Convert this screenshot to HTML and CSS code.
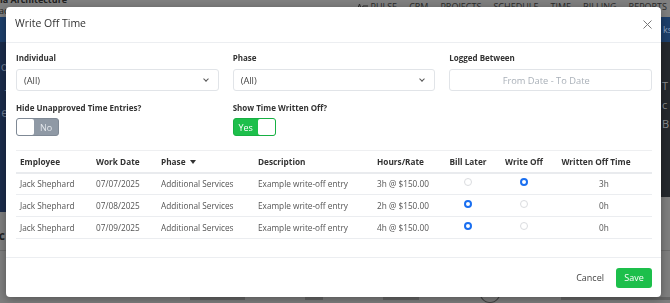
FILE: index.html
```html
<!DOCTYPE html>
<html>
<head>
    <meta charset="utf-8">
    <title>Write Off Time</title>
    <link rel="stylesheet" href="styles.css">
</head>
<body>
<!-- pagina de fundo (escurecida pelo modal) -->
<div class="app">
    <div class="topnav">
        <div class="brand">
            <span class="brand-name">nia Architecture</span>
            <span class="brand-sub">ac</span>
        </div>
        <nav class="menu">
            <span class="menu-item">
                <svg class="pulse-icon" width="13" height="8" viewBox="0 0 13 8"><path d="M0 5h3l1.5-4 2 6 1.5-4h5" fill="none" stroke="#2b2b2b" stroke-width="1"/></svg>PULSE
            </span>
            <span class="menu-item">CRM</span>
            <span class="menu-item">PROJECTS</span>
            <span class="menu-item">SCHEDULE</span>
            <span class="menu-item">TIME</span>
            <span class="menu-item">BILLING</span>
            <span class="menu-item">REPORTS</span>
        </nav>
    </div>
    <div class="band"><span class="band-link">ks</span></div>
    <div class="main">
        <div class="panel-left">
            <span>o</span><span>-</span><span>e</span>
        </div>
        <div class="panel-right">
            <span>T</span><span>c</span><span>B</span>
        </div>
    </div>
    <div class="section-title">fc</div>
    <!-- linha borrada atras do modal -->
    <div class="footer-row">
        <span class="blur-text w60"></span><span class="blur-text w20"></span><span class="blur-text w40"></span><span class="ring"></span><span class="blur-text w120"></span>
    </div>
</div>

<div class="modal">
    <div class="modal-header">
        <h5 class="modal-title">Write Off Time</h5>
        <button type="button" class="btn-close" aria-label="Close">
            <svg width="9" height="9" viewBox="0 0 9 9"><path d="M0.5 0.5l8 8M8.5 0.5l-8 8" stroke="#777" stroke-width="1"/></svg>
        </button>
    </div>
    <div class="modal-body">
        <div class="filters">
            <div class="field">
                <label>Individual</label>
                <div class="select"><span>(All)</span><span class="chevron"></span></div>
            </div>
            <div class="field">
                <label>Phase</label>
                <div class="select"><span>(All)</span><span class="chevron"></span></div>
            </div>
            <div class="field">
                <label>Logged Between</label>
                <div class="daterange">From Date - To Date</div>
            </div>
            <div class="field">
                <label>Hide Unapproved Time Entries?</label>
                <div class="toggle off"><span class="knob"></span><span class="toggle-text">No</span></div>
            </div>
            <div class="field">
                <label>Show Time Written Off?</label>
                <div class="toggle on"><span class="toggle-text">Yes</span><span class="knob"></span></div>
            </div>
        </div>

        <table class="entries">
            <colgroup>
                <col style="width:76px"><col style="width:65px"><col style="width:97px"><col style="width:119px">
                <col style="width:67px"><col style="width:56px"><col style="width:56px"><col style="width:100px">
            </colgroup>
            <thead>
                <tr>
                    <th>Employee</th>
                    <th>Work Date</th>
                    <th>Phase <span class="sort-arrow"></span></th>
                    <th>Description</th>
                    <th>Hours/Rate</th>
                    <th class="center">Bill Later</th>
                    <th class="center">Write Off</th>
                    <th class="center wot">Written Off Time</th>
                </tr>
            </thead>
            <tbody>
                <tr>
                    <td>Jack Shephard</td><td>07/07/2025</td><td>Additional Services</td><td>Example write-off entry</td><td>3h @ $150.00</td>
                    <td class="center"><span class="radio"></span></td>
                    <td class="center"><span class="radio checked"></span></td>
                    <td class="center wo">3h</td>
                </tr>
                <tr>
                    <td>Jack Shephard</td><td>07/08/2025</td><td>Additional Services</td><td>Example write-off entry</td><td>2h @ $150.00</td>
                    <td class="center"><span class="radio checked"></span></td>
                    <td class="center"><span class="radio"></span></td>
                    <td class="center wo">0h</td>
                </tr>
                <tr>
                    <td>Jack Shephard</td><td>07/09/2025</td><td>Additional Services</td><td>Example write-off entry</td><td>4h @ $150.00</td>
                    <td class="center"><span class="radio checked"></span></td>
                    <td class="center"><span class="radio"></span></td>
                    <td class="center wo">0h</td>
                </tr>
            </tbody>
        </table>
    </div>
    <div class="modal-footer">
        <button type="button" class="btn-cancel">Cancel</button>
        <button type="button" class="btn-save">Save</button>
    </div>
</div>
</body>
</html>
```

FILE: styles.css
```css
* {
   box-sizing: border-box;
   }

   html, body {
   margin: 0;
   height: 100%;
   }

   body {
   font-family: "Open Sans", "Liberation Sans", sans-serif;
   background: #7f7f7f;
   overflow: hidden;
   }

   /* fundo */
   .app {
   display: flex;
   flex-direction: column;
   height: 100%;
   }

   .topnav {
   height: 18px;
   display: flex;
   justify-content: space-between;
   background: #808080;
   }

   .brand {
   display: flex;
   flex-direction: column;
   margin-top: -5px;
   font-size: 9px;
   color: #222;
   line-height: 10px;
   }

   .brand-name {
   font-weight: 700;
   margin-left: -6px;
   }

   .brand-sub {
   margin-top: 1px;
   margin-left: -1px;
   }

   .menu {
   display: flex;
   gap: 12px;
   margin-top: -3px;
   padding-right: 3px;
   font-size: 9px;
   line-height: 12px;
   color: #2b2b2b;
   }

   .menu-item {
   display: flex;
   align-items: center;
   }

   .pulse-icon {
   margin-right: 3px;
   }

   .band {
   height: 27px;
   background: #1d3f6b;
   display: flex;
   justify-content: flex-end;
   align-items: center;
   }

   .band-link {
   font-size: 9px;
   color: #8ea3c0;
   margin-right: -2px;
   }

   .main {
   display: flex;
   justify-content: space-between;
   align-items: flex-start;
   }

   .panel-left {
   width: 120px;
   height: 170px;
   margin-left: -110px;
   background: #1b2c4b;
   display: flex;
   flex-direction: column;
   align-items: flex-end;
   gap: 6px;
   padding: 16px 2px 0 0;
   font-size: 12px;
   color: #6f7d93;
   }

   .panel-right {
   width: 120px;
   height: 155px;
   margin-right: -110px;
   background: #25292e;
   display: flex;
   flex-direction: column;
   gap: 4px;
   padding: 36px 0 0 2px;
   font-size: 11px;
   color: #8b8f94;
   }

   .section-title {
   margin-top: 15px;
   margin-left: -6px;
   font-size: 12px;
   font-weight: 700;
   color: #222;
   padding-bottom: 6px;
   border-bottom: 1px solid #6e6e6e;
   }

   .footer-row {
   margin-top: 46px;
   display: flex;
   align-items: flex-start;
   gap: 60px;
   padding-left: 190px;
   }

   .blur-text {
   height: 3px;
   background: #5a5a5a;
   opacity: 0.7;
   }

   .w20 { width: 20px; }
   .w40 { width: 40px; }
   .w60 { width: 60px; }
   .w120 { width: 120px; }

   .ring {
   width: 24px;
   height: 24px;
   border: 1px solid #444;
   border-radius: 50%;
   margin-top: -18px;
   }

   /* modal */
   .modal {
   position: fixed;
   top: 7px;
   left: 6px;
   width: 655px;
   height: 290px;
   background: #fff;
   border-radius: 4px;
   box-shadow: 0 2px 10px rgba(0, 0, 0, 0.35);
   display: flex;
   flex-direction: column;
   }

   .modal-header {
   height: 36px;
   flex: none;
   display: flex;
   justify-content: space-between;
   align-items: flex-start;
   padding: 8px 9px 0 9px;
   border-bottom: 1px solid #eceef1;
   }

   .modal-title {
   margin: 0;
   font-size: 10.5px;
   font-weight: 400;
   line-height: 16px;
   color: #333;
   }

   .btn-close {
   border: 0;
   background: none;
   padding: 0;
   margin-top: 5px;
   width: 9px;
   height: 9px;
   display: flex;
   }

   .modal-body {
   flex: 1;
   padding: 10px 9px 0 10px;
   }

   .filters {
   display: grid;
   grid-template-columns: repeat(3, 1fr);
   column-gap: 14px;
   row-gap: 12px;
   }

   .field label {
   display: block;
   font-size: 8px;
   font-weight: 700;
   line-height: 10px;
   color: #333;
   margin-bottom: 6px;
   }

   .select, .daterange {
   height: 22px;
   border: 1px solid #e1e4e8;
   border-radius: 3px;
   font-size: 9.3px;
   color: #444;
   display: flex;
   align-items: center;
   }

   .select {
   justify-content: space-between;
   padding: 0 10px 0 7px;
   }

   .chevron {
   width: 4px;
   height: 4px;
   border-right: 1px solid #555;
   border-bottom: 1px solid #555;
   transform: rotate(45deg);
   margin-top: -2px;
   }

   .daterange {
   justify-content: center;
   color: #a9b0b8;
   padding-right: 9px;
   }

   .field:nth-child(4) label, .field:nth-child(5) label {
   margin-bottom: 5px;
   }

   .toggle {
   width: 43px;
   height: 18px;
   border-radius: 3px;
   display: flex;
   align-items: stretch;
   font-size: 9px;
   color: #fff;
   }

   .toggle.off {
   background: #8f99a5;
   border: 1px solid #7f8995;
   color: #e4e8ec;
   }

   .toggle.on {
   background: #1dbf4b;
   border: 1px solid #17b043;
   }

   .knob {
   width: 17px;
   background: #fff;
   border-radius: 2px;
   }

   .toggle-text {
   flex: 1;
   display: flex;
   align-items: center;
   justify-content: center;
   }

   .entries {
   margin-top: 14px;
   width: 636px;
   table-layout: fixed;
   border-collapse: collapse;
   font-size: 8.25px;
   }

   .entries th, .entries td {
   height: 22px;
   padding: 0 4px;
   text-align: left;
   white-space: nowrap;
   }

   .entries th {
   color: #333;
   font-weight: 700;
   border-top: 1px solid #eeeff1;
   border-bottom: 2px solid #e9ebee;
   }

   .entries td {
   color: #555;
   border-bottom: 1px solid #ebedf0;
   }

   .entries .center {
   text-align: center;
   }

   .entries th.wot {
   padding-right: 16px;
   }

   .entries td.wo {
   padding-left: 8px;
   }

   .sort-arrow {
   display: inline-block;
   width: 0;
   height: 0;
   margin-left: 2px;
   border-left: 3px solid transparent;
   border-right: 3px solid transparent;
   border-top: 4px solid #333;
   vertical-align: 1px;
   }

   .radio {
   display: inline-block;
   width: 8px;
   height: 8px;
   border-radius: 50%;
   border: 1px solid #dadcdf;
   vertical-align: 1px;
   }

   .radio.checked {
   border: 2.5px solid #1a6ff0;
   }

   .modal-footer {
   height: 40px;
   flex: none;
   border-top: 1px solid #eceef1;
   display: flex;
   justify-content: flex-end;
   align-items: center;
   gap: 12px;
   padding: 0 9px;
   }

   .btn-cancel {
   border: 0;
   background: none;
   padding: 0;
   font-family: inherit;
   font-size: 9px;
   color: #444;
   }

   .btn-save {
   width: 36px;
   height: 20px;
   border: 0;
   border-radius: 3px;
   background: #1dbf4b;
   color: #fff;
   font-family: inherit;
   font-size: 9px;
   padding: 0;
   }
```
